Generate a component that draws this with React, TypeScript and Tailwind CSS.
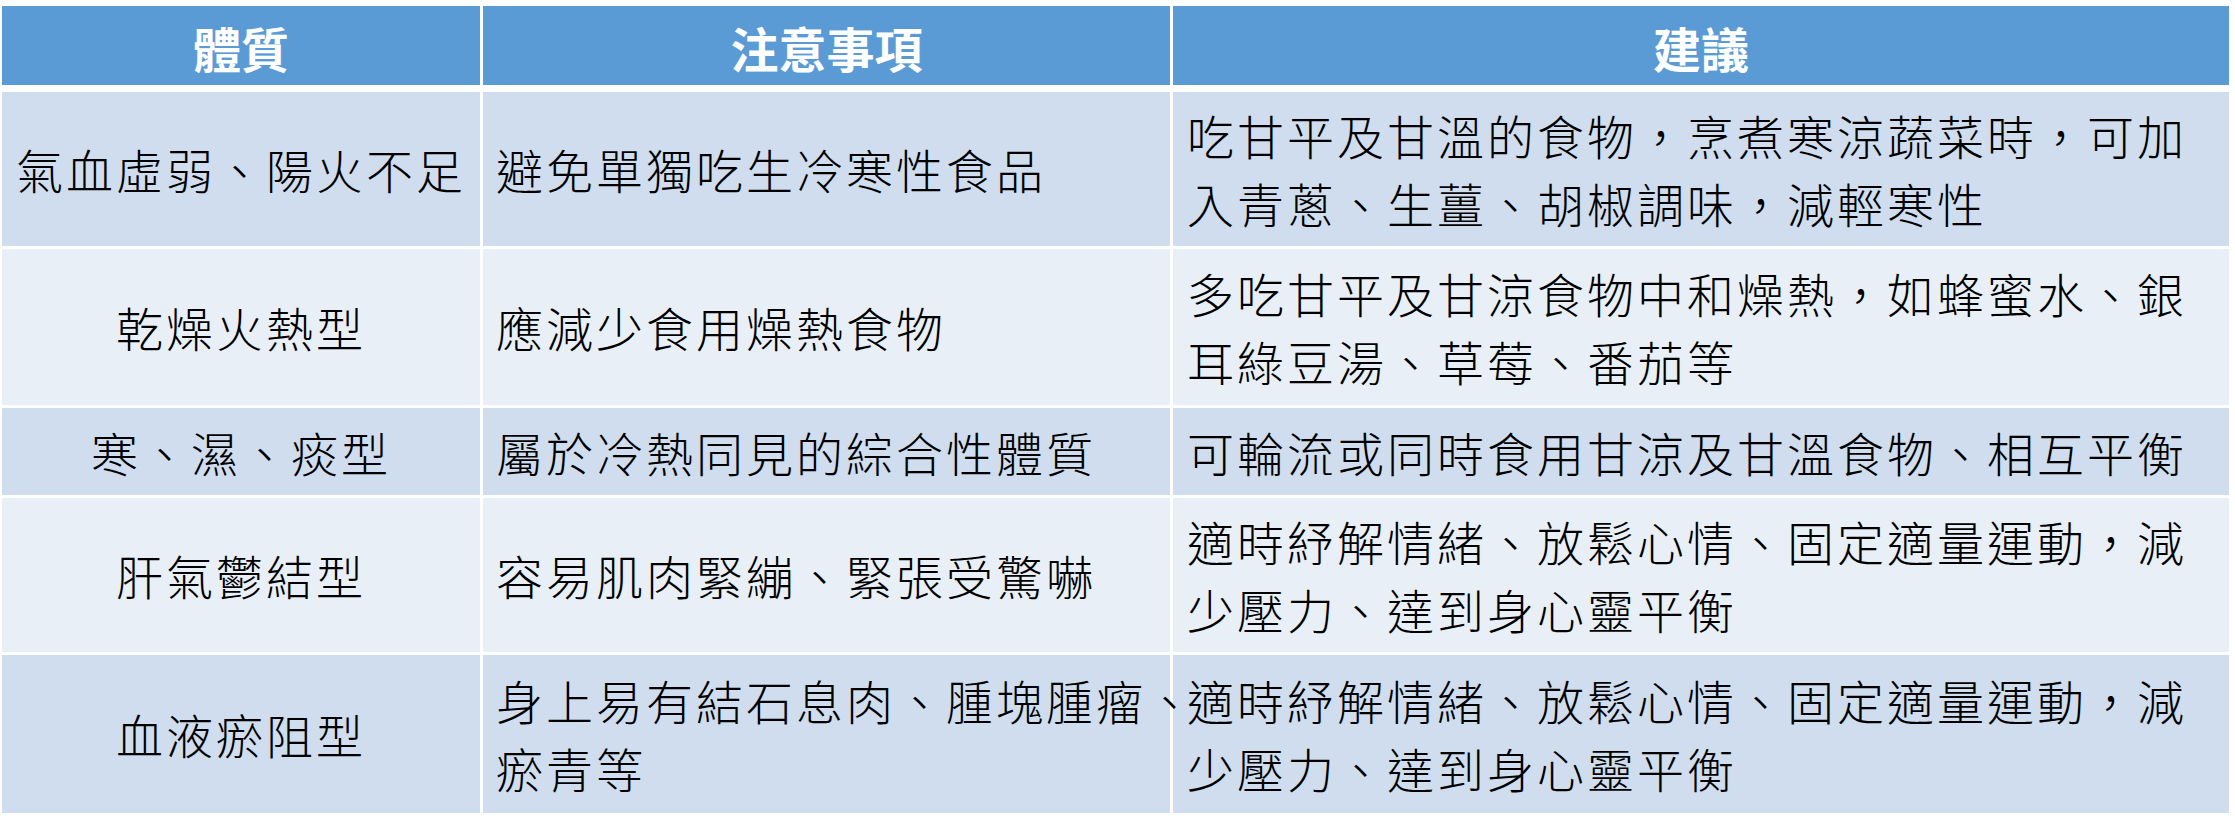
import React from "react";

const font = { fontFamily: '"Noto Sans CJK TC", "Noto Sans CJK SC", sans-serif' };

type Row = { h: string; bg: string; a: string[]; b: string[]; c: string[] };

const rows: Row[] = [
  {
    h: "h-[154px]",
    bg: "bg-[#cfddee]",
    a: ["氣血虛弱、陽火不足"],
    b: ["避免單獨吃生冷寒性食品"],
    c: ["吃甘平及甘溫的食物，烹煮寒涼蔬菜時，可加", "入青蔥、生薑、胡椒調味，減輕寒性"],
  },
  {
    h: "h-[156px]",
    bg: "bg-[#e9eff7]",
    a: ["乾燥火熱型"],
    b: ["應減少食用燥熱食物"],
    c: ["多吃甘平及甘涼食物中和燥熱，如蜂蜜水、銀", "耳綠豆湯、草莓、番茄等"],
  },
  {
    h: "h-[87px]",
    bg: "bg-[#cfddee]",
    a: ["寒、濕、痰型"],
    b: ["屬於冷熱同見的綜合性體質"],
    c: ["可輪流或同時食用甘涼及甘溫食物、相互平衡"],
  },
  {
    h: "h-[154px]",
    bg: "bg-[#e9eff7]",
    a: ["肝氣鬱結型"],
    b: ["容易肌肉緊繃、緊張受驚嚇"],
    c: ["適時紓解情緒、放鬆心情、固定適量運動，減", "少壓力、達到身心靈平衡"],
  },
  {
    h: "h-[158px]",
    bg: "bg-[#cfddee]",
    a: ["血液瘀阻型"],
    b: ["身上易有結石息肉、腫塊腫瘤、", "瘀青等"],
    c: ["適時紓解情緒、放鬆心情、固定適量運動，減", "少壓力、達到身心靈平衡"],
  },
];

function Lines({ lines }: { lines: string[] }) {
  return (
    <div className="relative z-10 whitespace-nowrap">
      {lines.map((l, i) => (
        <div key={i}>{l}</div>
      ))}
    </div>
  );
}

export default function App() {
  return (
    <div className="w-[2235px] h-[828px] bg-white overflow-hidden" style={font}>
      <div className="pl-[2px] pt-[6px] flex flex-col w-[2229px]">
        <div className="grid grid-cols-[478px_687px_1056px] gap-x-[3px] h-[79px] text-white font-bold text-[48px] leading-none">
          <div className="bg-[#5b9bd5] flex items-center justify-center pt-[3px]">體質</div>
          <div className="bg-[#5b9bd5] flex items-center justify-center pt-[3px]">注意事項</div>
          <div className="bg-[#5b9bd5] flex items-center justify-center pt-[3px]">建議</div>
        </div>
        <div className="mt-[7px] flex flex-col gap-[3px] text-black font-light text-[47px] leading-[68px] tracking-[3px]">
          {rows.map((r, i) => (
            <div key={i} className={`grid grid-cols-[478px_687px_1056px] gap-x-[3px] ${r.h}`}>
              <div className={`${r.bg} flex items-center justify-center`}>
                <Lines lines={r.a} />
              </div>
              <div className={`${r.bg} flex items-center pl-[13px]`}>
                <Lines lines={r.b} />
              </div>
              <div className={`${r.bg} flex items-center pl-[14px]`}>
                <Lines lines={r.c} />
              </div>
            </div>
          ))}
        </div>
      </div>
    </div>
  );
}
